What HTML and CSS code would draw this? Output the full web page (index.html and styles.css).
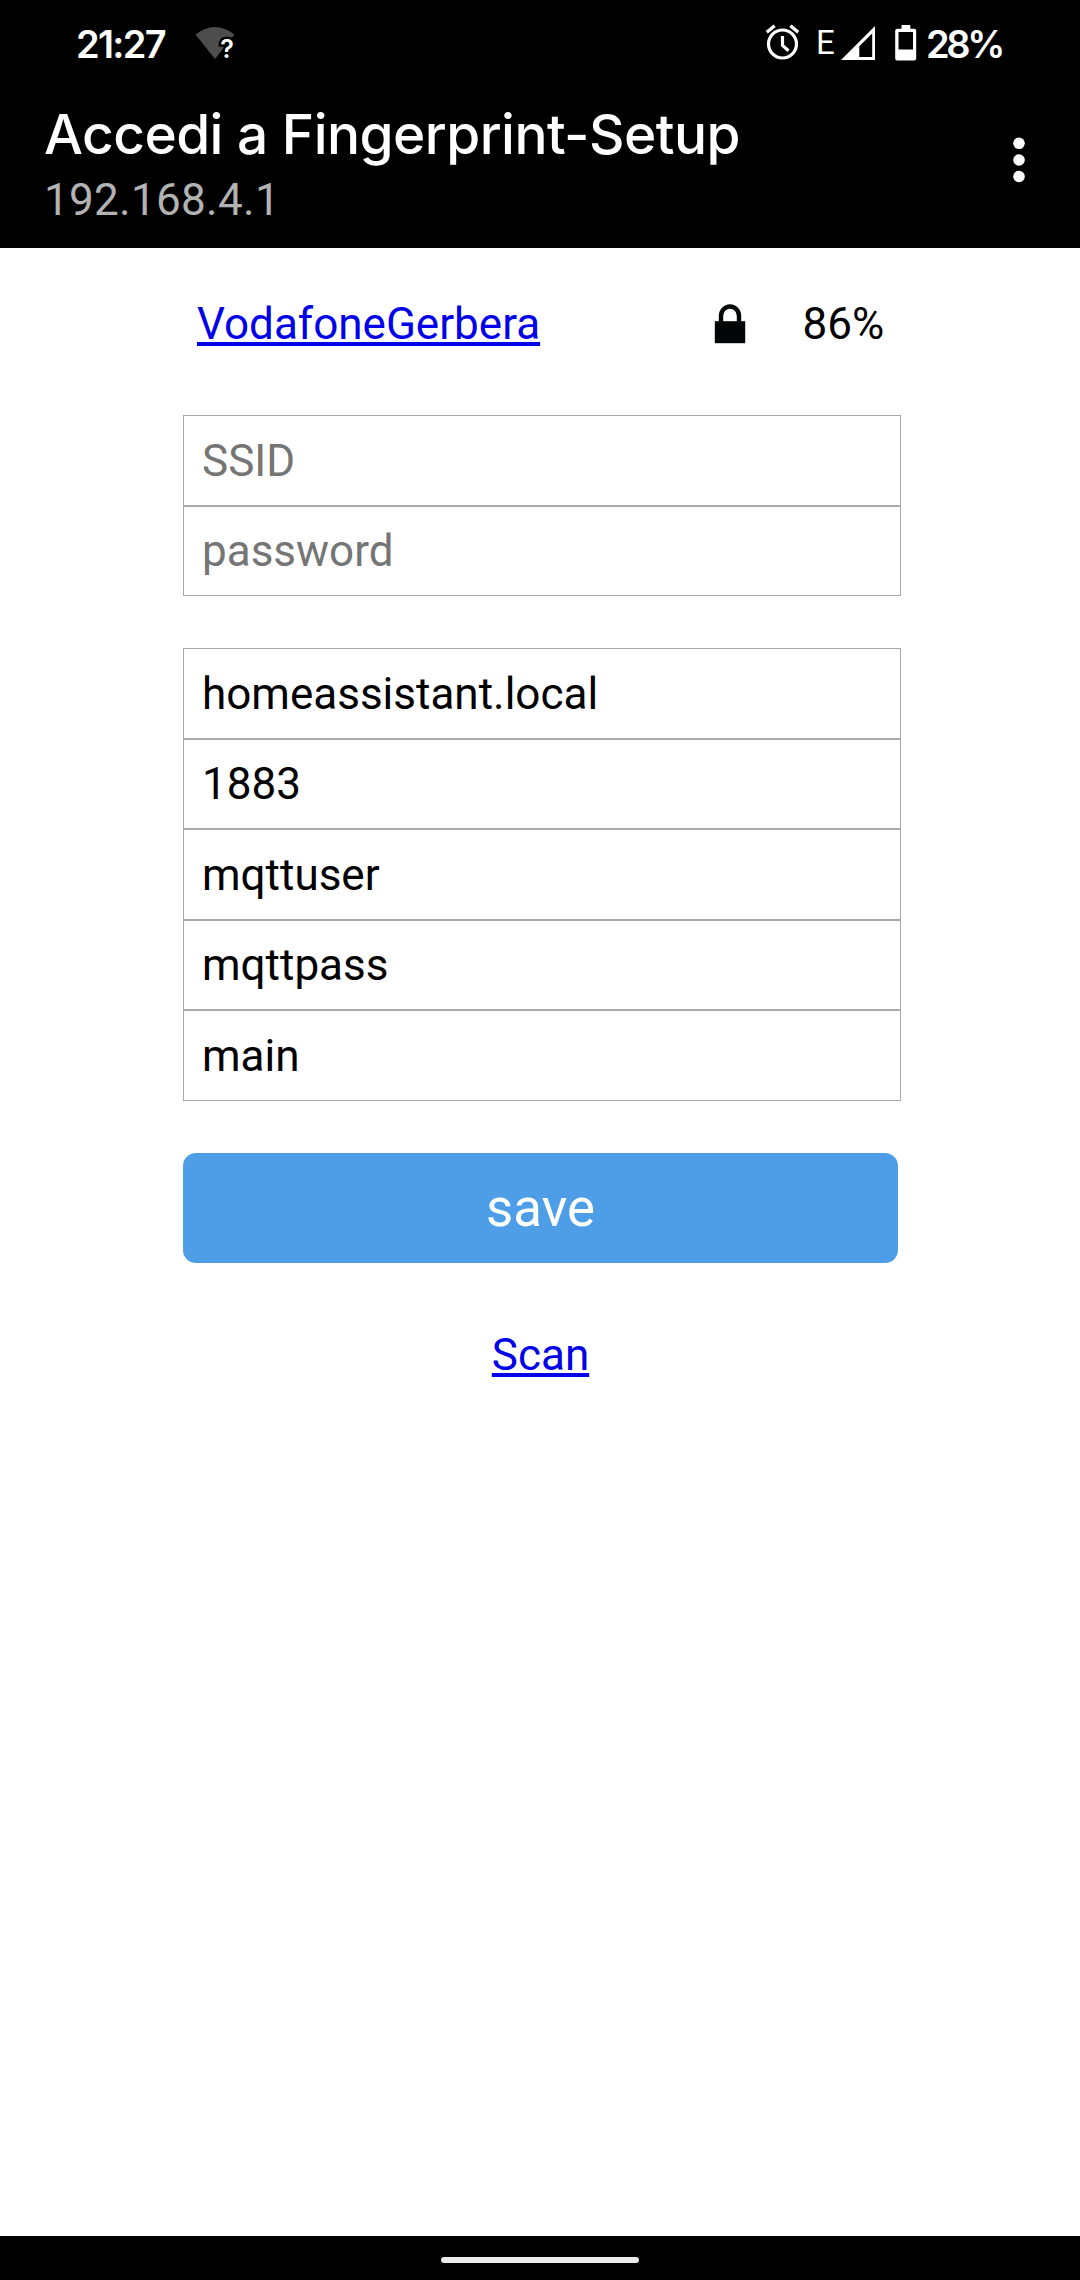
FILE: index.html
```html
<!DOCTYPE html>
<html lang="it">
<head>
<meta charset="utf-8">
<title>Fingerprint-Setup</title>
<link rel="stylesheet" href="styles.css">
</head>
<body>
<header class="top">
  <div class="status">
    <span class="clock">21:27</span>
    <svg class="wifi" width="50" height="50" viewBox="0 -8 50 50">
      <path d="M.5 8.500Q20-6.500 39.500 8.500L20 33Z" fill="#4d4d4d"/>
      <text class="wifi-mark" x="32" y="32" text-anchor="middle">?</text>
    </svg>
    <div class="indicators">
      <svg class="alarm" width="36" height="38" viewBox="0 0 36 38">
        <g fill="none" stroke="#fff">
          <circle cx="18.500" cy="20" r="14" stroke-width="3.200"/>
          <path d="M2.800 8.200L10.600 1.800M34.200 8.200L26.400 1.800" stroke-width="3.400"/>
          <path d="M18.500 12v9.400l6 5.300" stroke-width="3.200"/>
        </g>
      </svg>
      <span class="network">E</span>
      <svg class="signal" width="34" height="34" viewBox="0 0 34 34">
        <path d="M0 34L34 0V34ZM18.300 20.200V31H31.200V7.400Z" fill="#fff" fill-rule="evenodd"/>
      </svg>
      <svg class="battery" width="22" height="36" viewBox="0 0 22 36">
        <path d="M6.500 0h8.800v3.700h3.900q2 0 2 2v27.800q0 2-2 2h-17q-2 0-2-2v-27.800q0-2 2-2h4.300ZM3.500 7v17.600h14.500v-17.600Z" fill="#fff" fill-rule="evenodd"/>
      </svg>
      <span class="level">28%</span>
    </div>
  </div>
  <div class="appbar">
    <div class="titles">
      <h1 class="title">Accedi a Fingerprint-Setup</h1>
      <div class="host">192.168.4.1</div>
    </div>
    <svg class="more" width="12" height="46" viewBox="0 0 12 46" fill="#fff">
      <circle cx="6" cy="6.300" r="5.800"/><circle cx="6" cy="23" r="5.800"/><circle cx="6" cy="39.500" r="5.800"/>
    </svg>
  </div>
</header>
<main class="page">
  <div class="net">
    <a class="link" href="#p">VodafoneGerbera</a>
    <svg class="lock" width="32" height="40" viewBox="0 0 32 40">
      <path d="M7 18V12.200a9 9.700 0 0 1 18 0V18" fill="none" stroke="#030606" stroke-width="4.400"/>
      <path d="M.8 17.200H31.200V39.200H.8Z" fill="#030606"/>
    </svg>
    <span class="quality">86%</span>
  </div>
  <form class="form">
    <div class="group">
      <input class="field" placeholder="SSID">
      <input class="field" placeholder="password">
    </div>
    <div class="group">
      <input class="field" value="homeassistant.local">
      <input class="field" value="1883">
      <input class="field" value="mqttuser">
      <input class="field" value="mqttpass">
      <input class="field" value="main">
    </div>
    <button class="save" type="button">save</button>
  </form>
  <div class="scan"><a class="link" href="#scan">Scan</a></div>
</main>
<footer class="nav"><div class="pill"></div></footer>
</body>
</html>
```
FILE: styles.css
```css
* { box-sizing: border-box; }
body {
  margin: 0;
  height: 2280px;
  display: flex;
  flex-direction: column;
  background: #fff;
  color: #000;
  font: 44px/50px Roboto, sans-serif;
}
svg { display: block; flex: none; }

/* Status bar and app bar */
.top { height: 248px; background: #000; color: #fff; }
.status {
  height: 86px;
  display: flex;
  align-items: center;
  padding-left: 76px;
  font-family: Inter, sans-serif;
  font-weight: 600;
  font-size: 38px;
  line-height: 84px;
}
.clock { width: 119px; padding-top: 2px; letter-spacing: -1.7px; }
.wifi-mark { font: 600 25px Inter, sans-serif; fill: #fff; stroke: #000; stroke-width: 5px; paint-order: stroke; }
.indicators { display: flex; align-items: center; width: 316px; margin-left: auto; }
.network { width: 25px; margin-left: 16px; font: 400 33px/86px Roboto, sans-serif; }
.battery { margin-left: 20px; }
.level { margin-left: 9px; padding-top: 2px; letter-spacing: -3.4px; }
.appbar { display: flex; justify-content: space-between; padding: 16px 55px 0 44px; }
.title {
  margin: 0;
  font: 500 55px/64px Inter, sans-serif;
  letter-spacing: -0.55px;
  white-space: nowrap;
}
.host { margin-top: 9px; color: #b3b3b3; letter-spacing: 0.3px; }
.more { margin-top: 35px; }

/* Portal page */
.page { flex: 1; width: 718px; margin-left: 183px; }
.net { display: flex; align-items: center; height: 152px; padding-left: 14px; }
.link { color: #0000e9; text-decoration-thickness: 4px; text-underline-offset: 3px; text-decoration-skip-ink: none; }
.net .link { width: 517px; }
.quality { margin-left: 56.5px; }
.form { display: flex; flex-direction: column; gap: 52px; margin-top: 15px; }
.group { display: grid; grid-auto-rows: 91px 90px; }
.field {
  width: 100%;
  height: 100%;
  padding: 0 18px;
  border: 1px solid #a9a9a9;
  border-radius: 0;
  background: #fff;
  color: #000;
  font: 44px/50px Roboto, sans-serif;
}
.field::placeholder { color: #757575; }
.save {
  width: 715px;
  height: 110px;
  padding: 0;
  border: 0;
  border-radius: 13px;
  background: #4d9ee7;
  color: #fff;
  font: 52.8px/110px Roboto, sans-serif;
}
.scan { width: 715px; margin-top: 67px; text-align: center; }

/* Gesture navigation */
.nav { height: 44px; padding-top: 21px; background: #000; }
.pill { width: 198px; height: 6px; margin: 0 auto; border-radius: 3px; background: #ebebeb; }
```
